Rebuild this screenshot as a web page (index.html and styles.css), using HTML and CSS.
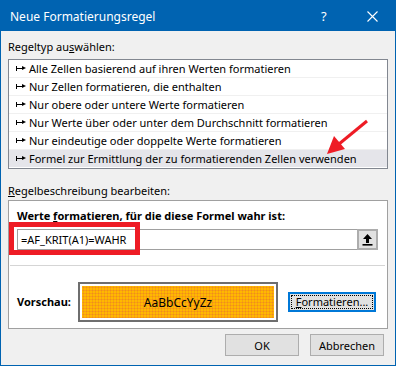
FILE: index.html
```html
<!DOCTYPE html>
<html lang="de">

<head>
    <meta charset="UTF-8">
    <title>Neue Formatierungsregel</title>
    <link rel="stylesheet" href="styles.css">
</head>

<body>
    <div class="dialog">
        <div class="titelleiste">
            <span class="titel">Neue Formatierungsregel</span>
            <span class="hilfe">?</span>
            <span class="schliessen">
                <svg width="11" height="11" viewBox="0 0 11 11">
                    <path d="M0.5 0.5 L10.5 10.5 M10.5 0.5 L0.5 10.5" stroke="#fff" stroke-width="1.1" fill="none" />
                </svg>
            </span>
        </div>

        <div class="inhalt">
            <div class="label">Regeltyp au<u>s</u>wählen:</div>

            <ul class="regelliste">
                <li><span class="pfeil"></span>Alle Zellen basierend auf ihren Werten formatieren</li>
                <li><span class="pfeil"></span>Nur Zellen formatieren, die enthalten</li>
                <li><span class="pfeil"></span>Nur obere oder untere Werte formatieren</li>
                <li><span class="pfeil"></span>Nur Werte über oder unter dem Durchschnitt formatieren</li>
                <li><span class="pfeil"></span>Nur eindeutige oder doppelte Werte formatieren</li>
                <li class="aktiv"><span class="pfeil"></span>Formel zur Ermittlung der zu formatierenden Zellen verwenden</li>
            </ul>

            <div class="label label-beschreibung"><u>R</u>egelbeschreibung bearbeiten:</div>

            <div class="beschreibung">
                <div class="fett">Werte <u>f</u>ormatieren, für die diese Formel wahr ist:</div>
                <div class="formelfeld">
                    <span class="formel">=AF_KRIT(A1)=WAHR</span>
                    <span class="hochladen">
                        <svg width="11" height="12" viewBox="0 0 11 12">
                            <path d="M5.5 0 L10 5 L7 5 L7 9 L4 9 L4 5 L1 5 Z" fill="#000" />
                            <rect x="0.5" y="10" width="10" height="1.6" fill="#000" />
                        </svg>
                    </span>
                </div>
                <div class="trenner"></div>
                <div class="vorschau-zeile">
                    <span class="fett vorschau-label">Vorschau:</span>
                    <div class="vorschau">
                        <div class="vorschau-innen">AaBbCcYyZz</div>
                    </div>
                    <button class="knopf knopf-fokus"><span><u>F</u>ormatieren...</span></button>
                </div>
                <div class="markierung"></div>
            </div>

            <div class="fusszeile">
                <button class="knopf knopf-breit">OK</button>
                <button class="knopf knopf-breit">Abbrechen</button>
            </div>
        </div>

        <svg class="roter-pfeil" width="60" height="50" viewBox="0 0 60 50">
            <path d="M52 3 L24 26" stroke="#ee1c25" stroke-width="3" fill="none" />
            <path d="M12 36 L19 18 L30 31 Z" fill="#ee1c25" />
        </svg>
    </div>
</body>

</html>
```

FILE: styles.css
```css
body {
    margin: 0;
    padding: 0;
    font-family: "Noto Sans", sans-serif;
    font-size: 11px;
    color: #000;
    background: #fff;
}

.dialog {
    position: relative;
    width: 396px;
    height: 366px;
    box-sizing: border-box;
    border: 1px solid #0063b1;
    background: #f0f0f0;
}

.titelleiste {
    height: 30px;
    background: #0063b1;
    color: #fff;
    display: flex;
    align-items: center;
    padding-left: 9px;
    font-size: 12px;
}

.titel {
    flex: 1;
}

.hilfe {
    width: 12px;
    font-size: 13px;
    margin-right: 34px;
}

.schliessen {
    display: flex;
    margin-right: 17px;
}

.inhalt {
    padding: 0 7px;
}

.label {
    line-height: 16px;
    padding-top: 8px;
    margin-bottom: 4px;
}

.label-beschreibung {
    padding-top: 14px;
    margin-bottom: 1px;
}

.regelliste {
    list-style: none;
    margin: 0;
    padding: 0;
    background: #fff;
    border: 1px solid #828790;
}

.regelliste li {
    height: 17px;
    line-height: 17px;
    border-bottom: 1px solid #f0f0f0;
    display: flex;
    align-items: center;
    padding-left: 7px;
    white-space: nowrap;
}

.regelliste li:last-child {
    border-bottom: 1px solid #fff;
}

.regelliste li.aktiv {
    background: #e5e5ea;
}

.pfeil {
    position: relative;
    width: 10px;
    height: 5px;
    margin-right: 3px;
    border-left: 1px solid #000;
    box-sizing: border-box;
}

.pfeil::before {
    content: "";
    position: absolute;
    left: 0;
    top: 2px;
    width: 5px;
    height: 1px;
    background: #000;
}

.pfeil::after {
    content: "";
    position: absolute;
    left: 5px;
    top: 0;
    border-left: 4px solid #000;
    border-top: 2.5px solid transparent;
    border-bottom: 2.5px solid transparent;
}

.beschreibung {
    position: relative;
    background: #fff;
    border: 1px solid #a0a0a0;
    padding: 7px 9px 6px 8px;
}

.fett {
    font-weight: bold;
    line-height: 16px;
}

.formelfeld {
    margin-top: 5px;
    height: 21px;
    box-sizing: border-box;
    border: 1px solid #a0a0a0;
    display: flex;
    align-items: center;
    justify-content: space-between;
}

.formel {
    padding-left: 3px;
}

.hochladen {
    width: 21px;
    height: 21px;
    margin: -1px -1px -1px 0;
    box-sizing: border-box;
    border: 2px solid #adadad;
    background: #e1e1e1;
    display: flex;
    align-items: center;
    justify-content: center;
}

.trenner {
    height: 1px;
    background: #d5d5d5;
    margin: 15px -7px 0 -7px;
}

.vorschau-zeile {
    display: flex;
    align-items: center;
    margin-top: 16px;
}

.vorschau-label {
    width: 61px;
}

.vorschau {
    width: 200px;
    height: 40px;
    box-sizing: border-box;
    border: 2px solid #6e6e6e;
    padding: 2px;
    background: #fff;
}

.vorschau-innen {
    height: 100%;
    background-color: #ffb800;
    background-image: radial-gradient(circle, #f08c1e 0.9px, transparent 1.1px);
    background-size: 3px 3px;
    display: flex;
    align-items: center;
    justify-content: center;
    font-size: 12px;
}

.knopf {
    font-family: "Noto Sans", sans-serif;
    font-size: 11px;
    color: #000;
    background: #e1e1e1;
    border: 1px solid #adadad;
    height: 21px;
    padding: 0;
}

.knopf-fokus {
    margin-left: 10px;
    width: 88px;
    height: 20px;
    border: 2px solid #0078d7;
    padding: 1px;
}

.knopf-fokus span {
    display: block;
    border: 1px dotted #000;
    line-height: 12px;
    height: 12px;
}

.markierung {
    position: absolute;
    left: 0;
    top: 21px;
    width: 131px;
    height: 33px;
    box-sizing: border-box;
    border: 5px solid #ee1c25;
}

.fusszeile {
    display: flex;
    justify-content: flex-end;
    gap: 11px;
    margin-top: 5px;
    padding-right: 4px;
}

.knopf-breit {
    width: 74px;
    height: 22px;
}

.roter-pfeil {
    position: absolute;
    left: 314px;
    top: 117px;
}
```
